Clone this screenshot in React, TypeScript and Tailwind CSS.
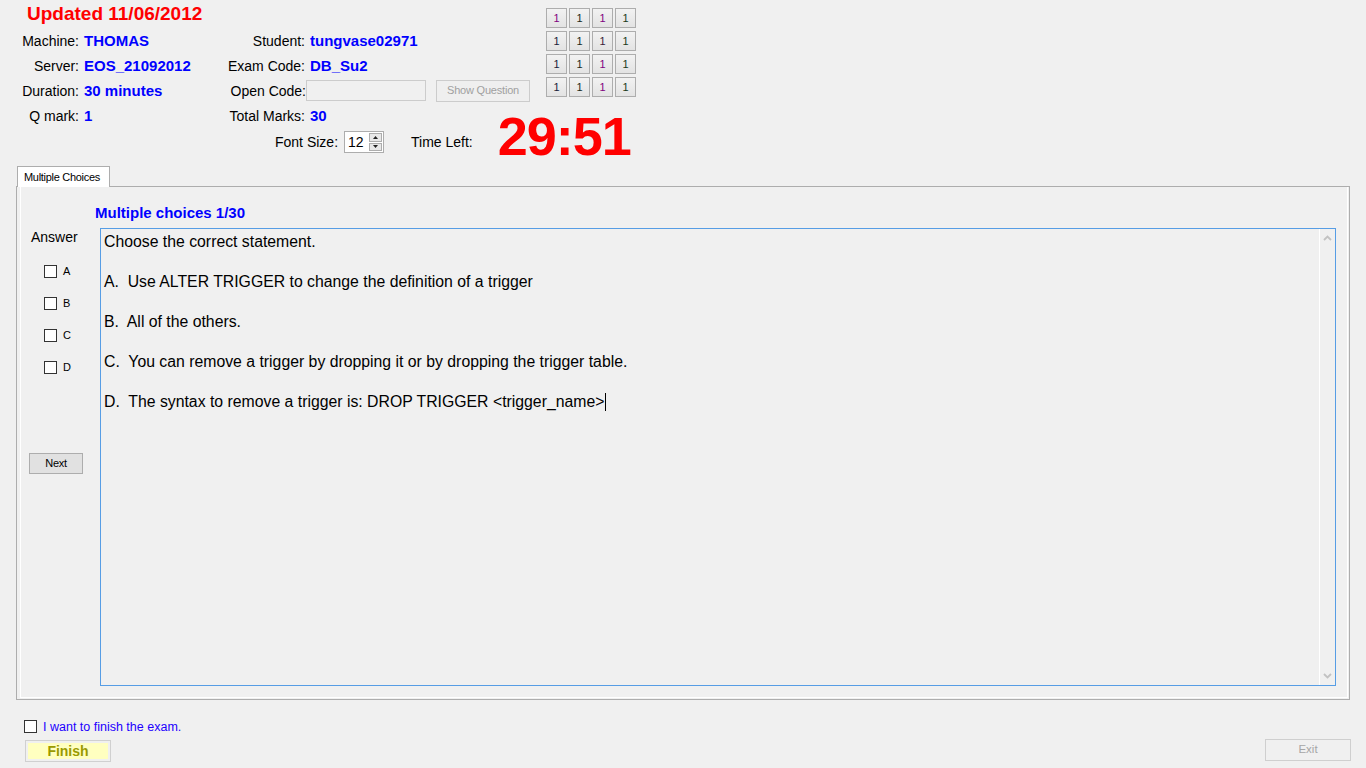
import { useState } from "react";

const gridColors = [
  ["#800080", "#1a2a1a", "#800080", "#1a3a1a"],
  ["#1a1a3a", "#1a2a1a", "#3a1a3a", "#1a3a1a"],
  ["#1a1a3a", "#1a2a1a", "#800080", "#1a3a1a"],
  ["#1a1a3a", "#1a2a1a", "#800080", "#1a3a1a"],
];

const questionLines = [
  "Choose the correct statement.",
  "",
  "A.  Use ALTER TRIGGER to change the definition of a trigger",
  "",
  "B.  All of the others.",
  "",
  "C.  You can remove a trigger by dropping it or by dropping the trigger table.",
  "",
  "D.  The syntax to remove a trigger is: DROP TRIGGER <trigger_name>",
];

const Label = ({ children, w }: { children: React.ReactNode; w: string }) => (
  <div className={`${w} shrink-0 text-right text-[14px] leading-[16px]`}>{children}</div>
);

const Value = ({ children, w }: { children: React.ReactNode; w?: string }) => (
  <div className={`${w ?? ""} ml-[5px] shrink-0 text-[15px] font-bold leading-[17px] text-[#0000ff]`}>{children}</div>
);

const Box = ({ checked, onClick }: { checked: boolean; onClick: () => void }) => (
  <button
    onClick={onClick}
    className="flex h-[13px] w-[13px] shrink-0 items-center justify-center border border-[#333333] bg-white"
  >
    {checked && (
      <svg width="9" height="9" viewBox="0 0 9 9">
        <polyline points="1,4.5 3.5,7 8,1.5" fill="none" stroke="#333" strokeWidth="1.6" />
      </svg>
    )}
  </button>
);

const Chevron = ({ up }: { up?: boolean }) => (
  <svg width="9" height="6" viewBox="0 0 9 6">
    <polyline
      points={up ? "1,5 4.5,1.5 8,5" : "1,1 4.5,4.5 8,1"}
      fill="none"
      stroke="#c2c2c2"
      strokeWidth="1.8"
    />
  </svg>
);

export default function App() {
  const [answers, setAnswers] = useState<Record<string, boolean>>({});
  const [finish, setFinish] = useState(false);

  return (
    <div className="h-[768px] w-[1366px] overflow-hidden bg-[#f0f0f0] font-['Liberation_Sans',Arial,sans-serif] text-black">
      {/* header */}
      <div className="flex items-start">
        <div className="w-[546px] shrink-0">
          <div className="h-[28px] pl-[27px] pt-[3px] text-[19px] font-bold leading-[22px] text-[#ff0000]">
            Updated 11/06/2012
          </div>
          <div className="flex h-[25px] items-center">
            <Label w="w-[79px]">Machine:</Label>
            <Value w="w-[142px]">THOMAS</Value>
            <Label w="w-[79px]">Student:</Label>
            <Value>tungvase02971</Value>
          </div>
          <div className="flex h-[25px] items-center">
            <Label w="w-[79px]">Server:</Label>
            <Value w="w-[142px]">EOS_21092012</Value>
            <Label w="w-[79px]">Exam Code:</Label>
            <Value>DB_Su2</Value>
          </div>
          <div className="flex h-[25px] items-center">
            <Label w="w-[79px]">Duration:</Label>
            <Value w="w-[142px]">30 minutes</Value>
            <Label w="w-[80px]">Open Code:</Label>
            <div className="h-[21px] w-[120px] shrink-0 border border-[#cccccc] bg-[#f0f0f0]" />
            <button className="ml-[10px] h-[22px] w-[94px] border border-[#cccccc] bg-[#efefef] text-[11px] tracking-[-0.2px] text-[#a0a0a0]">
              Show Question
            </button>
          </div>
          <div className="flex h-[25px] items-center">
            <Label w="w-[79px]">Q mark:</Label>
            <Value w="w-[142px]">1</Value>
            <Label w="w-[79px]">Total Marks:</Label>
            <Value>30</Value>
          </div>
        </div>
        <div className="mt-[8px] grid grid-cols-[repeat(4,21px)] grid-rows-[repeat(4,20px)] gap-x-[2px] gap-y-[3px]">
          {gridColors.map((row, r) =>
            row.map((c, i) => (
              <button
                key={`${r}-${i}`}
                className="flex h-[20px] w-[21px] items-center justify-center border border-[#adadad] bg-gradient-to-b from-[#f2f2f2] to-[#e3e3e3] text-[11px]"
                style={{ color: c }}
              >
                1
              </button>
            ))
          )}
        </div>
      </div>

      {/* font size / timer */}
      <div className="flex h-[28px] items-center pl-[275px]">
        <span className="text-[14px] leading-[16px]">Font Size:</span>
        <div className="ml-[6px] flex h-[22px] w-[40px] items-stretch border border-[#adadad] bg-white">
          <span className="flex-1 pl-[3px] text-[14px] leading-[20px]">12</span>
          <div className="flex w-[14px] flex-col gap-px py-px pr-px">
            <div className="flex flex-1 items-center justify-center border border-[#adadad] bg-[#e8e8e8]">
              <svg width="5" height="3" viewBox="0 0 5 3"><polygon points="0,3 2.5,0 5,3" fill="#222" /></svg>
            </div>
            <div className="flex flex-1 items-center justify-center border border-[#adadad] bg-[#e8e8e8]">
              <svg width="5" height="3" viewBox="0 0 5 3"><polygon points="0,0 2.5,3 5,0" fill="#222" /></svg>
            </div>
          </div>
        </div>
        <span className="ml-[27px] text-[14px] leading-[16px]">Time Left:</span>
        <span className="mb-[12px] ml-[25px] text-[54px] font-bold leading-none tracking-[-1px] text-[#ff0000]">
          29:51
        </span>
      </div>

      {/* tab control */}
      <div className="mt-[10px] pl-[17px]">
        <div className="relative z-10 -mb-px flex h-[21px] w-[93px] items-center border border-b-0 border-[#adadad] bg-white pl-[6px] text-[11px] tracking-[-0.3px]">
          Multiple Choices
        </div>
      </div>
      <div className="ml-[16px] h-[514px] w-[1334px] border border-[#adadad] pb-px pl-[3px] pr-px">
        <div className="flex h-full flex-col border-x border-b border-white">
          <div className="ml-[74px] mb-[7px] mt-[18px] h-[16px] text-[15px] font-bold leading-[16px] text-[#0000ff]">
            Multiple choices 1/30
          </div>
          <div className="flex">
            <div className="w-[79px] shrink-0">
              <div className="mt-px pl-[10px] text-[14px] leading-[16px]">Answer</div>
              <div className="mt-[20px] flex flex-col gap-[19px] pl-[23px]">
                {["A", "B", "C", "D"].map((k) => (
                  <div key={k} className="flex h-[13px] items-center">
                    <Box checked={!!answers[k]} onClick={() => setAnswers({ ...answers, [k]: !answers[k] })} />
                    <span className="ml-[6px] text-[11px] leading-[13px]">{k}</span>
                  </div>
                ))}
              </div>
              <button className="ml-[8px] mt-[79px] h-[21px] w-[54px] border border-[#adadad] bg-[#e1e1e1] text-[11px] tracking-[-0.3px]">
                Next
              </button>
            </div>
            <div className="flex h-[458px] w-[1236px] border border-[#569de5]">
              <div className="flex-1 pl-[3px] pt-[3px] text-[15.8px] leading-[20px]">
                {questionLines.map((l, i) => (
                  <div key={i} className="h-[20px] whitespace-pre">
                    {l}
                    {i === questionLines.length - 1 && (
                      <span className="ml-px inline-block h-[18px] w-px bg-black align-[-4px]" />
                    )}
                  </div>
                ))}
              </div>
              <div className="flex w-[16px] flex-col items-center justify-between border-l border-white py-[6px]">
                <Chevron up />
                <Chevron />
              </div>
            </div>
          </div>
        </div>
      </div>

      {/* bottom */}
      <div className="mt-[20px] flex h-[13px] items-center pl-[24px]">
        <Box checked={finish} onClick={() => setFinish(!finish)} />
        <span className="ml-[6px] text-[12.5px] leading-[14px] text-[#2200ff]">I want to finish the exam.</span>
      </div>
      <div className="mt-[7px] flex items-start">
        <button className="ml-[25px] h-[22px] w-[86px] border border-[#d0d0d0] p-[2px]">
          <div className="flex h-full w-full items-center justify-center bg-[#ffffc0] text-[14px] font-bold text-[#9a9a00]">
            Finish
          </div>
        </button>
        <button className="ml-auto mr-[15px] -mt-px h-[22px] w-[86px] border border-[#cfcfcf] bg-[#f0f0f0] text-[11.5px] text-[#a6a6a6]">
          Exit
        </button>
      </div>
    </div>
  );
}
